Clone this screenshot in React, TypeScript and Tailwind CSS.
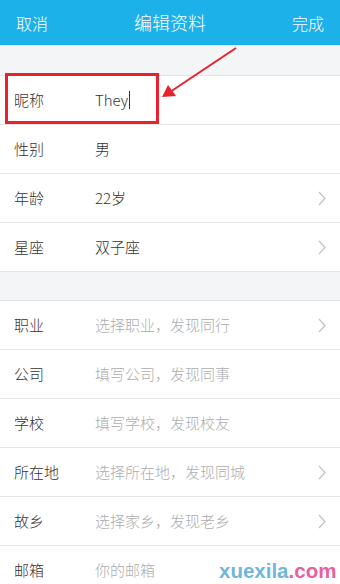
type Row = { label: string; value: string; placeholder?: boolean; arrow?: boolean }

const basic: Row[] = [
  { label: '昵称', value: 'They' },
  { label: '性别', value: '男' },
  { label: '年龄', value: '22岁', arrow: true },
  { label: '星座', value: '双子座', arrow: true },
]

const more: Row[] = [
  { label: '职业', value: '选择职业，发现同行', placeholder: true, arrow: true },
  { label: '公司', value: '填写公司，发现同事', placeholder: true },
  { label: '学校', value: '填写学校，发现校友', placeholder: true },
  { label: '所在地', value: '选择所在地，发现同城', placeholder: true, arrow: true },
  { label: '故乡', value: '选择家乡，发现老乡', placeholder: true, arrow: true },
  { label: '邮箱', value: '你的邮箱', placeholder: true },
]

function Chevron() {
  return (
    <svg width="8" height="15" viewBox="0 0 8 15" className="mr-[14px] shrink-0">
      <polyline points="1,1 7,7.5 1,14" fill="none" stroke="#c2c2c2" strokeWidth="1.2" />
    </svg>
  )
}

function ListRow({ row, first }: { row: Row; first?: boolean }) {
  return (
    <div
      className={`flex items-center bg-white ${first ? 'h-[48px]' : 'h-[49px] border-t border-[#e6e6e8]'}`}
    >
      <span className="w-[95px] shrink-0 pl-[14px] text-[15px] font-light text-[#333]">{row.label}</span>
      <span className={`flex-1 text-[15px] font-light ${row.placeholder ? 'text-[#adadad]' : 'text-[#333]'}`}>
        {row.value}
        {row.label === '昵称' && <span className="ml-[1px] inline-block h-[18px] w-px bg-[#333] align-[-3px]" />}
      </span>
      {row.arrow && <Chevron />}
    </div>
  )
}

export default function App() {
  return (
    <div className="relative h-[584px] w-[340px] overflow-hidden bg-[#f4f5f7] font-['Noto_Sans_CJK_SC',sans-serif]">
      <div className="flex h-[45px] items-center justify-between bg-[#1db1ea] px-4 text-[16px] font-light text-white">
        <span>取消</span>
        <span className="text-[18px]">编辑资料</span>
        <span>完成</span>
      </div>

      <div className="mt-[30px] border-y border-[#e6e6e8]">
        {basic.map((r, i) => (
          <ListRow key={r.label} row={r} first={i === 0} />
        ))}
      </div>

      <div className="mt-[28px] border-t border-[#e6e6e8]">
        {more.map((r, i) => (
          <ListRow key={r.label} row={r} first={i === 0} />
        ))}
      </div>

      {/* red annotation */}
      <div className="absolute left-[5px] top-[73px] h-[51px] w-[154px] border-[3px] border-[#e8222a]" />
      <svg className="absolute left-0 top-0" width="340" height="584" viewBox="0 0 340 584">
        <line x1="236" y1="48" x2="170" y2="92" stroke="#e8222a" strokeWidth="2" />
        <polygon points="162,97 168,85 176,96" fill="#e8222a" />
      </svg>

      {/* watermark */}
      <div className="absolute left-[219px] top-[559px] font-['Liberation_Sans',sans-serif] text-[20.5px] font-bold leading-[24px]">
        <span className="text-[#72b7d9]">xuexila</span>
        <span className="text-[#e7609f]">.com</span>
      </div>
    </div>
  )
}
